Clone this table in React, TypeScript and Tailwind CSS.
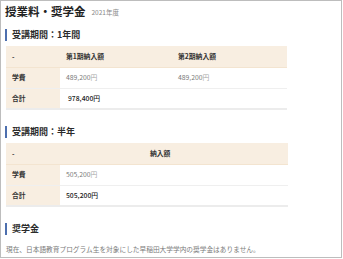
import React from "react";

const font = { fontFamily: '"Noto Sans CJK JP", "Noto Sans", sans-serif' };

function Heading({ children }: { children: React.ReactNode }) {
  return (
    <div className="flex h-[12px] items-stretch">
      <div className="w-[2px] bg-[#4d6fae]" />
      <div className="pl-[5px] text-[9px] leading-[12px] font-bold text-[#2b2b2b]">{children}</div>
    </div>
  );
}

function Yen({ value, strong }: { value: string; strong?: boolean }) {
  return (
    <span className={strong ? "text-[#222] font-medium" : "text-[#7a7a7a]"}>
      {value}
      <span className={strong ? "" : "text-[#a8a8a8]"}>円</span>
    </span>
  );
}

export default function App() {
  return (
    <div className="w-[343px] h-[259px] bg-white" style={font}>
      <div className="w-[342px] h-[258px] border border-[#bdbdbd] px-[4px] overflow-hidden">
        <div className="mt-[3px] flex h-[14px] items-end gap-[6px]">
          <span className="text-[11.5px] leading-[14px] font-semibold text-[#222]">授業料・奨学金</span>
          <span className="text-[6.5px] leading-[11px] text-[#888]">2021年度</span>
        </div>

        <div className="mt-[11px]">
          <Heading>受講期間：1年間</Heading>
        </div>

        <table className="mt-[5px] ml-[1px] w-[281px] table-fixed border-collapse text-[6.8px] text-[#333]">
          <colgroup>
            <col className="w-[54px]" />
            <col className="w-[112px]" />
            <col className="w-[115px]" />
          </colgroup>
          <tbody>
            <tr className="h-[21px] bg-[#f8eee1] border-b border-[#f3e4d0]">
              <td className="pl-[6px] font-bold">-</td>
              <td className="pl-[6px] font-bold">第1期納入額</td>
              <td className="pl-[6px] font-bold">第2期納入額</td>
            </tr>
            <tr className="h-[21px] border-b border-[#efefef]">
              <td className="pl-[6px] font-bold bg-[#f8eee1]">学費</td>
              <td className="pl-[6px]"><Yen value="489,200" /></td>
              <td className="pl-[6px]"><Yen value="489,200" /></td>
            </tr>
            <tr className="h-[21px] border-b-2 border-[#ececec]">
              <td className="pl-[6px] font-bold bg-[#f8eee1]">合計</td>
              <td className="pl-[8px]" colSpan={2}><Yen value="978,400" strong /></td>
            </tr>
          </tbody>
        </table>

        <div className="mt-[16px]">
          <Heading>受講期間：半年</Heading>
        </div>

        <table className="mt-[5px] ml-[1px] w-[282px] table-fixed border-collapse text-[6.8px] text-[#333]">
          <colgroup>
            <col className="w-[54px]" />
            <col className="w-[228px]" />
          </colgroup>
          <tbody>
            <tr className="h-[21px] bg-[#f8eee1] border-b border-[#f3e4d0]">
              <td className="pl-[6px] font-bold">-</td>
              <td className="pl-[90px] font-bold">納入額</td>
            </tr>
            <tr className="h-[21px] border-b border-[#efefef]">
              <td className="pl-[6px] font-bold bg-[#f8eee1]">学費</td>
              <td className="pl-[6px]"><Yen value="505,200" /></td>
            </tr>
            <tr className="h-[21px] border-b-2 border-[#ececec]">
              <td className="pl-[6px] font-bold bg-[#f8eee1]">合計</td>
              <td className="pl-[6px]"><Yen value="505,200" strong /></td>
            </tr>
          </tbody>
        </table>

        <div className="mt-[16px]">
          <Heading>奨学金</Heading>
        </div>

        <p className="mt-[9px] ml-[1px] text-[6.7px] leading-[10px] text-[#7a7a7a]">
          現在、日本語教育プログラム生を対象にした早稲田大学学内の奨学金はありません。
        </p>
      </div>
    </div>
  );
}
